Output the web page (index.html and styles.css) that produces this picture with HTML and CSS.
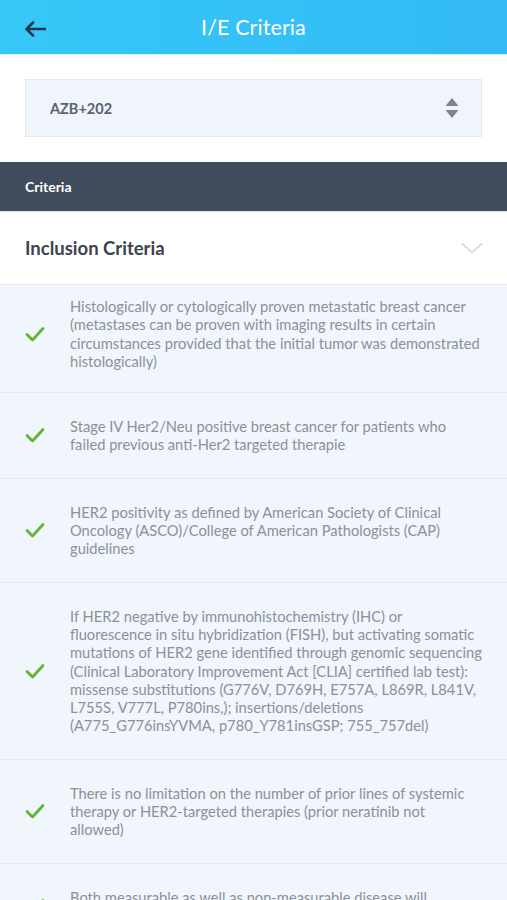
FILE: index.html
```html
<!DOCTYPE html>
<html>
<head>
<meta charset="utf-8">
<link rel="stylesheet" href="styles.css">
</head>
<body>
<div class="app">
  <header class="topbar">
    <svg class="back" width="22" height="16" viewBox="0 0 22 16"><path d="M21 8H3M9 1.5L2.5 8 9 14.5" fill="none" stroke="#24394f" stroke-width="2.6" stroke-linecap="round" stroke-linejoin="round"/></svg>
    <h1 class="title">I/E Criteria</h1>
  </header>
  <div class="picker-wrap">
    <div class="picker">
      <span class="picker-value">AZB+202</span>
      <svg class="updown" width="14" height="22" viewBox="0 0 14 22"><path d="M7 1L13.5 9H0.5Z M7 21L13.5 13H0.5Z" fill="#7b8391"/></svg>
    </div>
  </div>
  <div class="section-bar">Criteria</div>
  <div class="group-head">
    <span class="group-title">Inclusion Criteria</span>
    <svg class="chev" width="22" height="12" viewBox="0 0 22 12"><path d="M1 1.5L11 10.5 21 1.5" fill="none" stroke="#cfd4da" stroke-width="1.6"/></svg>
  </div>
  <ul class="list">
    <li class="item first"><svg class="check" width="20" height="16" viewBox="0 0 20 16"><path d="M2 8.5L7.5 14 18 2.5" fill="none" stroke="#5db82f" stroke-width="2.8" stroke-linecap="round" stroke-linejoin="round"/></svg><p>Histologically or cytologically proven metastatic breast cancer (metastases can be proven with imaging results in certain circumstances provided that the initial tumor was demonstrated histologically)</p></li>
    <li class="item"><svg class="check" width="20" height="16" viewBox="0 0 20 16"><path d="M2 8.5L7.5 14 18 2.5" fill="none" stroke="#5db82f" stroke-width="2.8" stroke-linecap="round" stroke-linejoin="round"/></svg><p>Stage IV Her2/Neu positive breast cancer for patients who failed previous anti-Her2 targeted therapie</p></li>
    <li class="item"><svg class="check" width="20" height="16" viewBox="0 0 20 16"><path d="M2 8.5L7.5 14 18 2.5" fill="none" stroke="#5db82f" stroke-width="2.8" stroke-linecap="round" stroke-linejoin="round"/></svg><p>HER2 positivity as defined by American Society of Clinical Oncology (ASCO)/College of American Pathologists (CAP) guidelines</p></li>
    <li class="item"><svg class="check" width="20" height="16" viewBox="0 0 20 16"><path d="M2 8.5L7.5 14 18 2.5" fill="none" stroke="#5db82f" stroke-width="2.8" stroke-linecap="round" stroke-linejoin="round"/></svg><p>If HER2 negative by immunohistochemistry (IHC) or fluorescence in situ hybridization (FISH), but activating somatic mutations of HER2 gene identified through genomic sequencing (Clinical Laboratory Improvement Act [CLIA] certified lab test): missense substitutions (G776V, D769H, E757A, L869R, L841V, L755S, V777L, P780ins,); insertions/deletions (A775_G776insYVMA, p780_Y781insGSP; 755_757del)</p></li>
    <li class="item"><svg class="check" width="20" height="16" viewBox="0 0 20 16"><path d="M2 8.5L7.5 14 18 2.5" fill="none" stroke="#5db82f" stroke-width="2.8" stroke-linecap="round" stroke-linejoin="round"/></svg><p>There is no limitation on the number of prior lines of systemic therapy or HER2-targeted therapies (prior neratinib not<br>allowed)</p></li>
    <li class="item"><svg class="check" width="20" height="16" viewBox="0 0 20 16"><path d="M2 8.5L7.5 14 18 2.5" fill="none" stroke="#5db82f" stroke-width="2.8" stroke-linecap="round" stroke-linejoin="round"/></svg><p>Both measurable as well as non-measurable disease will<br>be allowed</p></li>
  </ul>
</div>
</body>
</html>
```
FILE: styles.css
```css
html, body {
  margin: 0;
  padding: 0;
  background: #ffffff;
}
body {
  font-family: Lato, "Open Sans", sans-serif;
  width: 507px;
  height: 900px;
  overflow: hidden;
}
.topbar {
  height: 54px;
  background: linear-gradient(90deg, #36c8f6 0%, #33b9f6 100%);
  border-bottom: 1px solid #e4eef5;
  display: flex;
  align-items: center;
  justify-content: center;
  position: relative;
}
.back {
  position: absolute;
  left: 24px;
  top: 21px;
}
.title {
  margin: 0;
  color: #ffffff;
  font-size: 21.5px;
  font-weight: 400;
  letter-spacing: 0.1px;
}
.picker-wrap {
  padding: 24px 25px 25px;
}
.picker {
  height: 56px;
  background: #f0f5fb;
  border: 1px solid #e3e9f0;
  display: flex;
  align-items: center;
  justify-content: space-between;
  padding: 0 22px 0 24px;
}
.picker-value {
  font-size: 14.5px;
  font-weight: 700;
  color: #5a6271;
}
.section-bar {
  height: 49px;
  background: #414c5c;
  color: #ffffff;
  font-size: 14px;
  font-weight: 700;
  display: flex;
  align-items: center;
  padding-left: 25px;
  border-bottom: 1px solid #d8dde3;
}
.group-head {
  height: 72px;
  display: flex;
  align-items: center;
  justify-content: space-between;
  padding: 0 24px 0 25px;
  border-bottom: 1px solid #e3e9ef;
}
.group-title {
  font-size: 18.5px;
  font-weight: 700;
  color: #3c4350;
}
.list {
  list-style: none;
  margin: 0;
  padding: 0;
  background: #f1f6fc;
}
.item {
  display: flex;
  align-items: center;
  padding: 24px 20px 24px 25px;
  border-bottom: 1px solid #e4e9ef;
}
.item.first {
  padding-top: 12px;
  padding-bottom: 22px;
}
.check {
  flex: none;
  width: 20px;
  margin-right: 25px;
}
.item p {
  margin: 0;
  font-size: 14.7px;
  line-height: 18.3px;
  color: #8b9099;
  width: 413px;
}
```
